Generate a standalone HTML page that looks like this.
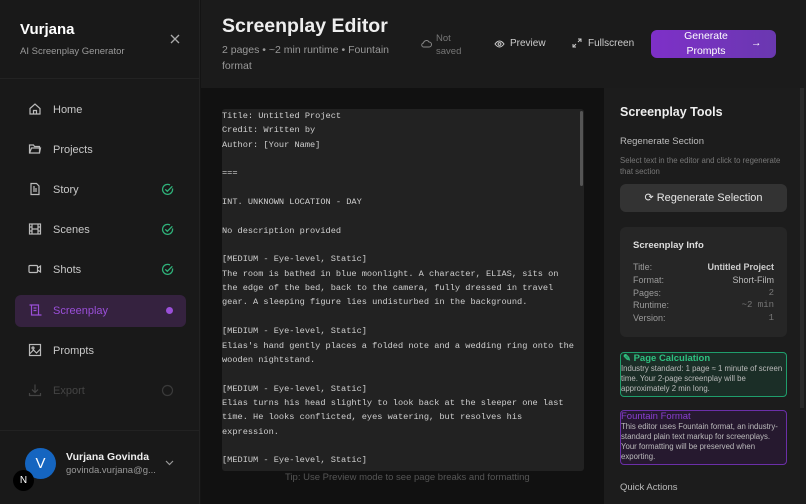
<!DOCTYPE html>
<html><head><meta charset="utf-8"><style>
*{margin:0;padding:0;box-sizing:border-box}
body{width:806px;height:504px;overflow:hidden;background:#141414;font-family:"Liberation Sans",sans-serif;color:#e6e6e6;position:relative}
.abs{position:absolute}
#side{left:0;top:0;width:200px;height:504px;background:#191919;border-right:1px solid #222}
.nav{position:absolute;left:15px;width:171px;height:32px;display:flex;align-items:center;font-size:11px;color:#c8c8c8}
.nav svg.ic{position:absolute;left:13px;top:8px}
.nav span{position:absolute;left:38px}
.nav svg.chk{position:absolute;left:146px;top:9px}
#hdr{left:201px;top:0;width:605px;height:88px;background:#1b1b1b}
#ed{left:201px;top:88px;width:403px;height:416px;background:#111}
#box{left:222px;top:109px;width:362px;height:362px;background:#222;border-radius:3px;overflow:hidden}
pre{font-family:"Liberation Mono",monospace;font-size:8.65px;line-height:14.35px;color:#cfcfcf;padding:0;white-space:pre}
#rp{left:604px;top:88px;width:202px;height:416px;background:#1c1c1c}
.row{display:flex;justify-content:space-between;font-size:9px;color:#9a9a9a;line-height:12.8px}
</style></head><body>
<div id="side" class="abs">
<div class="abs" style="left:20px;top:21px;font-size:15px;font-weight:bold;color:#fff">Vurjana</div>
<div class="abs" style="left:20px;top:46px;font-size:9.5px;color:#9a9a9a">AI Screenplay Generator</div>
<svg class="abs" style="left:169px;top:33px" width="12" height="12" viewBox="0 0 12 12"><path d="M2 2L10 10M10 2L2 10" stroke="#aaa" stroke-width="1.3"/></svg>
<div class="abs" style="left:0;top:78px;width:200px;height:1px;background:#232323"></div>
<div class="nav" style="top:94px"><svg class="ic" width="14" height="14" viewBox="0 0 14 14" fill="none" stroke="#bbb" stroke-width="1.2"><path d="M2 6.5L7 2l5 4.5V12H2z M5.5 12V8.5h3V12"/></svg><span>Home</span></div>
<div class="nav" style="top:134px"><svg class="ic" width="14" height="14" viewBox="0 0 14 14" fill="none" stroke="#bbb" stroke-width="1.2"><path d="M1.5 3h4l1 1.5h5V11h-10z M1.5 11l2-5h9l-1 5"/></svg><span>Projects</span></div>
<div class="nav" style="top:174px"><svg class="ic" width="14" height="14" viewBox="0 0 14 14" fill="none" stroke="#bbb" stroke-width="1.2"><path d="M3 1.5h5.5l2.5 2.5v8.5H3z M5 7h4M5 9h4M5 5h2"/></svg><span>Story</span><svg class="chk" width="13" height="13" viewBox="0 0 13 13" fill="none" stroke="#2fb27a" stroke-width="1.3"><path d="M11.5 5.5A5 5 0 1 1 9 2 M4.3 6.3l2 2 5-5"/></svg></div>
<div class="nav" style="top:214px"><svg class="ic" width="14" height="14" viewBox="0 0 14 14" fill="none" stroke="#bbb" stroke-width="1.2"><rect x="1.5" y="2" width="11" height="10"/><path d="M4 2v10M10 2v10M1.5 5h2.5M1.5 9h2.5M10 5h2.5M10 9h2.5M4 7h6"/></svg><span>Scenes</span><svg class="chk" width="13" height="13" viewBox="0 0 13 13" fill="none" stroke="#2fb27a" stroke-width="1.3"><path d="M11.5 5.5A5 5 0 1 1 9 2 M4.3 6.3l2 2 5-5"/></svg></div>
<div class="nav" style="top:254px"><svg class="ic" width="14" height="14" viewBox="0 0 14 14" fill="none" stroke="#bbb" stroke-width="1.2"><rect x="1" y="3.5" width="8.5" height="7" rx="1"/><path d="M9.5 6l3-2v6l-3-2"/></svg><span>Shots</span><svg class="chk" width="13" height="13" viewBox="0 0 13 13" fill="none" stroke="#2fb27a" stroke-width="1.3"><path d="M11.5 5.5A5 5 0 1 1 9 2 M4.3 6.3l2 2 5-5"/></svg></div>
<div class="nav" style="top:295px;background:#35223f;border-radius:6px;color:#9a4fd8"><svg class="ic" width="14" height="14" viewBox="0 0 14 14" fill="none" stroke="#9a4fd8" stroke-width="1.2"><path d="M1.5 2h9v10h3 M3.5 2v10h8 M5.5 5h3M5.5 7.5h3"/></svg><span>Screenplay</span><div style="position:absolute;left:151px;top:12px;width:7px;height:7px;border-radius:50%;background:#9a4fd8"></div></div>
<div class="nav" style="top:335px"><svg class="ic" width="14" height="14" viewBox="0 0 14 14" fill="none" stroke="#bbb" stroke-width="1.2"><rect x="1.5" y="1.5" width="11" height="11"/><circle cx="5" cy="5" r="1"/><path d="M1.5 11l4-4 3 3 4-4"/></svg><span>Prompts</span></div>
<div class="nav" style="top:375px;color:#444"><svg class="ic" width="14" height="14" viewBox="0 0 14 14" fill="none" stroke="#444" stroke-width="1.2"><path d="M7 1.5v8M4 6.5l3 3 3-3M1.5 10v2.5h11V10"/></svg><span>Export</span><svg class="chk" width="13" height="13" viewBox="0 0 13 13" fill="none" stroke="#3a3a3a" stroke-width="1.2"><circle cx="6.5" cy="6.5" r="5"/></svg></div>
<div class="abs" style="left:0;top:430px;width:200px;height:1px;background:#222"></div>
<div class="abs" style="left:25px;top:448px;width:31px;height:31px;border-radius:50%;background:#1565c0;color:#fff;font-size:15px;text-align:center;line-height:31px">V</div>
<div class="abs" style="left:13px;top:470px;width:21px;height:21px;border-radius:50%;background:#000;color:#fff;font-size:10px;text-align:center;line-height:21px">N</div>
<div class="abs" style="left:66px;top:451px;font-size:10.5px;font-weight:bold;color:#eee">Vurjana Govinda</div>
<div class="abs" style="left:66px;top:465px;font-size:9.5px;color:#999">govinda.vurjana@g...</div>
<svg class="abs" style="left:165px;top:460px" width="9" height="6" viewBox="0 0 9 6"><path d="M1 1l3.5 3.5L8 1" fill="none" stroke="#999" stroke-width="1.2"/></svg>
</div>
<div id="hdr" class="abs">
<div class="abs" style="left:21px;top:15px;font-size:19.5px;font-weight:bold;color:#eee">Screenplay Editor</div>
<div class="abs" style="left:21px;top:42px;width:190px;font-size:10.5px;line-height:16px;color:#999">2 pages • ~2 min runtime • Fountain format</div>
<svg class="abs" style="left:220px;top:39px" width="11" height="9" viewBox="0 0 11 9"><path d="M3 8h5a2.5 2.5 0 0 0 0-5 3 3 0 0 0-5.5 1A2 2 0 0 0 3 8z" fill="none" stroke="#888" stroke-width="1"/></svg>
<div class="abs" style="left:235px;top:32px;font-size:9.5px;line-height:13px;color:#777">Not<br>saved</div>
<svg class="abs" style="left:293px;top:40px" width="11" height="8" viewBox="0 0 11 8"><path d="M1 4q4.5-6 9 0q-4.5 6-9 0z" fill="none" stroke="#ccc" stroke-width="1"/><circle cx="5.5" cy="4" r="1.4" fill="none" stroke="#ccc"/></svg>
<div class="abs" style="left:309px;top:38px;font-size:10px;color:#ccc">Preview</div>
<svg class="abs" style="left:371px;top:38px" width="10" height="10" viewBox="0 0 10 10"><path d="M6 1h3v3M9 1L6 4M4 9H1V6M1 9l3-3" fill="none" stroke="#ccc" stroke-width="1"/></svg>
<div class="abs" style="left:387px;top:38px;font-size:10px;color:#ccc">Fullscreen</div>
<div class="abs" style="left:450px;top:30px;width:125px;height:28px;border-radius:6px;background:linear-gradient(90deg,#7e30c8,#6a38b0);color:#fff;font-size:10.5px;line-height:15px">
<div style="position:absolute;left:25px;top:-1px;width:60px;text-align:center">Generate Prompts</div>
<div style="position:absolute;left:100px;top:6px">→</div></div>
</div>
<div id="ed" class="abs"></div>
<div id="box" class="abs"><pre>Title: Untitled Project
Credit: Written by
Author: [Your Name]

===

INT. UNKNOWN LOCATION - DAY

No description provided

[MEDIUM - Eye-level, Static]
The room is bathed in blue moonlight. A character, ELIAS, sits on
the edge of the bed, back to the camera, fully dressed in travel
gear. A sleeping figure lies undisturbed in the background.

[MEDIUM - Eye-level, Static]
Elias's hand gently places a folded note and a wedding ring onto the
wooden nightstand.

[MEDIUM - Eye-level, Static]
Elias turns his head slightly to look back at the sleeper one last
time. He looks conflicted, eyes watering, but resolves his
expression.

[MEDIUM - Eye-level, Static]</pre>
<div class="abs" style="left:358px;top:2px;width:3px;height:75px;background:#555;border-radius:2px"></div></div>
<div class="abs" style="left:285px;top:472px;font-size:9.5px;color:#555">Tip: Use Preview mode to see page breaks and formatting</div>
<div id="rp" class="abs">
<div class="abs" style="left:16px;top:17px;font-size:12.5px;font-weight:bold;color:#eee">Screenplay Tools</div>
<div class="abs" style="left:16px;top:48px;font-size:9.5px;color:#bbb">Regenerate Section</div>
<div class="abs" style="left:16px;top:68px;width:175px;font-size:7.8px;line-height:10.5px;color:#777">Select text in the editor and click to regenerate that section</div>
<div class="abs" style="left:16px;top:96px;width:167px;height:28px;border-radius:6px;background:#333;color:#e6e6e6;font-size:11px;text-align:center;line-height:28px">⟳ Regenerate Selection</div>
<div class="abs" style="left:16px;top:139px;width:167px;height:110px;border-radius:6px;background:#262626;padding:13px 13px">
<div style="font-size:9.5px;font-weight:bold;color:#ddd;margin-bottom:10px">Screenplay Info</div>
<div class="row"><span>Title:</span><span style="color:#ccc;font-weight:bold">Untitled Project</span></div>
<div class="row"><span>Format:</span><span style="color:#bbb">Short-Film</span></div>
<div class="row"><span>Pages:</span><span style="font-family:'Liberation Mono',monospace;color:#777">2</span></div>
<div class="row"><span>Runtime:</span><span style="font-family:'Liberation Mono',monospace;color:#777">~2 min</span></div>
<div class="row"><span>Version:</span><span style="font-family:'Liberation Mono',monospace;color:#777">1</span></div>
</div>
<div class="abs" style="left:16px;top:264px;width:167px;height:45px;border-radius:4px;border:1px solid #1f9e6c;background:#1b2e27;font-size:7.8px;line-height:10px;color:#bbb;padding:1px 0">
<div style="color:#2fc080;font-weight:bold;font-size:9.5px;padding-left:2px">✎ Page Calculation</div>Industry standard: 1 page ≈ 1 minute of screen time. Your 2-page screenplay will be approximately 2 min long.</div>
<div class="abs" style="left:16px;top:322px;width:167px;height:55px;border-radius:4px;border:1px solid #6b2fa8;background:#26192f;font-size:7.8px;line-height:10px;color:#bbb;padding:1px 0">
<div style="color:#8a3fd0;font-size:9.5px">Fountain Format</div>This editor uses Fountain format, an industry-standard plain text markup for screenplays. Your formatting will be preserved when exporting.</div>
<div class="abs" style="left:16px;top:394px;font-size:9.5px;color:#bbb">Quick Actions</div>
<div class="abs" style="left:196px;top:0;width:4px;height:320px;background:#2a2a2a"></div>
</div>
</body></html>
